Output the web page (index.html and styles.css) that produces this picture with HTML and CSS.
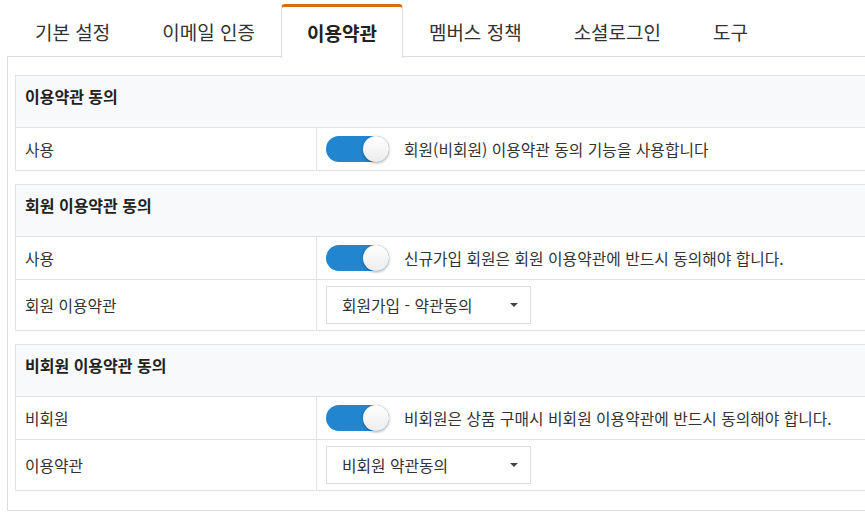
FILE: index.html
```html
<!DOCTYPE html>
<html lang="ko">
<head>
<meta charset="utf-8">
<title>이용약관</title>
<link rel="stylesheet" href="styles.css">
</head>
<body>
<div class="page">
  <nav class="tabs">
    <a class="tab">기본 설정</a>
    <a class="tab">이메일 인증</a>
    <a class="tab active">이용약관</a>
    <a class="tab">멤버스 정책</a>
    <a class="tab">소셜로그인</a>
    <a class="tab">도구</a>
  </nav>
  <div class="panel">
    <section class="card">
      <div class="card-head">이용약관 동의</div>
      <div class="row">
        <div class="label">사용</div>
        <div class="value"><span class="toggle"><span class="knob"></span></span><span class="desc">회원(비회원) 이용약관 동의 기능을 사용합니다</span></div>
      </div>
    </section>
    <section class="card">
      <div class="card-head">회원 이용약관 동의</div>
      <div class="row">
        <div class="label">사용</div>
        <div class="value"><span class="toggle"><span class="knob"></span></span><span class="desc">신규가입 회원은 회원 이용약관에 반드시 동의해야 합니다.</span></div>
      </div>
      <div class="row tall">
        <div class="label">회원 이용약관</div>
        <div class="value"><div class="select"><span>회원가입 - 약관동의</span><span class="caret"></span></div></div>
      </div>
    </section>
    <section class="card">
      <div class="card-head">비회원 이용약관 동의</div>
      <div class="row">
        <div class="label">비회원</div>
        <div class="value"><span class="toggle"><span class="knob"></span></span><span class="desc">비회원은 상품 구매시 비회원 이용약관에 반드시 동의해야 합니다.</span></div>
      </div>
      <div class="row tall">
        <div class="label">이용약관</div>
        <div class="value"><div class="select"><span>비회원 약관동의</span><span class="caret"></span></div></div>
      </div>
    </section>
  </div>
</div>
</body>
</html>
```

FILE: styles.css
```css
* { box-sizing: border-box; }
html, body { margin: 0; padding: 0; background: #fff; overflow: hidden; }
body {
  font-family: "Noto Sans CJK KR", "Noto Sans", sans-serif;
  color: #333;
}
.page { width: 920px; padding-top: 4px; }
.tabs {
  display: flex;
  height: 53px;
  border-bottom: 1px solid #dcdcdc;
  margin-left: 7px;
  padding-left: 2px;
}
.tab {
  display: flex;
  align-items: center;
  padding: 0 25px 1px;
  font-size: 19px;
  color: #333;
  height: 53px;
  border: 1px solid transparent;
  border-top: 3px solid transparent;
  border-bottom: none;
}
.tab.active {
  font-weight: bold;
  color: #222;
  background: #fff;
  border-color: #dcdcdc;
  border-top-color: #d96e10;
  border-radius: 4px 4px 0 0;
  height: 54px;
  margin-bottom: -1px;
}
.panel {
  margin-left: 7px;
  border: 1px solid #dcdcdc;
  border-top: none;
  padding: 18px 0 19px 7px;
  display: flex;
  flex-direction: column;
  gap: 13px;
}
.card {
  border: 1px solid #e2e2e2;
  background: #fff;
}
.card-head {
  height: 52px;
  background: #f8f9fa;
  font-size: 16px;
  line-height: 20px;
  font-weight: bold;
  color: #222;
  padding: 10px 9px 0;
  border-bottom: 1px solid #e2e2e2;
}
.row {
  display: flex;
  height: 43px;
  border-bottom: 1px solid #e2e2e2;
}
.row.tall { height: 51px; }
.card .row:last-child { border-bottom: none; height: 42px; }
.card .row.tall:last-child { height: 50px; }
.label {
  width: 301px;
  flex: none;
  padding: 0 9px;
  display: flex;
  align-items: center;
  font-size: 15.8px;
  color: #333;
  border-right: 1px solid #e2e2e2;
}
.value {
  flex: 1;
  display: flex;
  align-items: center;
  padding: 0 9px;
  font-size: 15.8px;
  color: #333;
}
.toggle {
  position: relative;
  width: 63px;
  height: 26px;
  border-radius: 13px;
  background: #2185d0;
  flex: none;
  margin-right: 15px;
}
.knob {
  position: absolute;
  right: 0;
  top: 0;
  width: 26px;
  height: 26px;
  border-radius: 50%;
  background: linear-gradient(#ffffff, #ececec);
  box-shadow: 0 1px 3px rgba(0,0,0,0.35);
}
.select {
  width: 205px;
  height: 38px;
  border: 1px solid #dcdcdc;
  display: flex;
  align-items: center;
  justify-content: space-between;
  padding: 0 12px 0 15px;
  font-size: 15.8px;
  color: #333;
}
.caret {
  width: 0;
  height: 0;
  border-left: 4px solid transparent;
  border-right: 4px solid transparent;
  border-top: 4px solid #444;
}
```
